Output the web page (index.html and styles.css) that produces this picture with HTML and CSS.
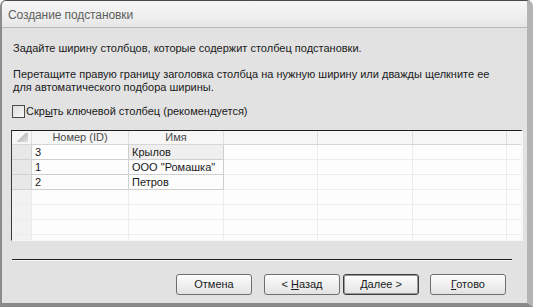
FILE: index.html
```html
<!DOCTYPE html>
<html lang="ru">
<head>
<meta charset="utf-8">
<title>Создание подстановки</title>
<link rel="stylesheet" href="styles.css">
</head>
<body>
<div class="window">
  <div class="titlebar">Создание подстановки</div>
  <div class="content">
    <p class="p1">Задайте ширину столбцов, которые содержит столбец подстановки.</p>
    <p class="p2">Перетащите правую границу заголовка столбца на нужную ширину или дважды щелкните ее<br>для автоматического подбора ширины.</p>
    <label class="check"><span class="box"></span><span>Скр<u>ы</u>ть ключевой столбец (рекомендуется)</span></label>
    <div class="grid">
      <div class="row head">
        <div class="cell sel corner"></div>
        <div class="cell c">Номер (ID)</div>
        <div class="cell c">Имя</div>
        <div class="cell"></div><div class="cell"></div><div class="cell"></div><div class="cell"></div>
      </div>
      <div class="row data cur">
        <div class="cell sel"></div>
        <div class="cell active">3</div>
        <div class="cell">Крылов</div>
        <div class="cell"></div><div class="cell"></div><div class="cell"></div><div class="cell"></div>
      </div>
      <div class="row data">
        <div class="cell sel"></div>
        <div class="cell">1</div>
        <div class="cell">ООО "Ромашка"</div>
        <div class="cell"></div><div class="cell"></div><div class="cell"></div><div class="cell"></div>
      </div>
      <div class="row data">
        <div class="cell sel"></div>
        <div class="cell">2</div>
        <div class="cell">Петров</div>
        <div class="cell"></div><div class="cell"></div><div class="cell"></div><div class="cell"></div>
      </div>
      <div class="row empty"><div class="cell sel"></div><div class="cell"></div><div class="cell"></div><div class="cell"></div><div class="cell"></div><div class="cell"></div><div class="cell"></div></div>
      <div class="row empty"><div class="cell sel"></div><div class="cell"></div><div class="cell"></div><div class="cell"></div><div class="cell"></div><div class="cell"></div><div class="cell"></div></div>
      <div class="row empty"><div class="cell sel"></div><div class="cell"></div><div class="cell"></div><div class="cell"></div><div class="cell"></div><div class="cell"></div><div class="cell"></div></div>
      <div class="row empty"><div class="cell sel"></div><div class="cell"></div><div class="cell"></div><div class="cell"></div><div class="cell"></div><div class="cell"></div><div class="cell"></div></div>
    </div>
    <div class="sep"></div>
    <div class="buttons">
      <button class="btn">Отмена</button>
      <button class="btn b2">&lt; <u>Н</u>азад</button>
      <button class="btn b3 default"><u>Д</u>алее &gt;</button>
      <button class="btn b4"><u>Г</u>отово</button>
    </div>
  </div>
</div>
</body>
</html>
```

FILE: styles.css
```css
* { box-sizing: border-box; }
html, body { margin: 0; padding: 0; background: #ffffff; }
body {
  font-family: "Liberation Sans", Arial, sans-serif;
  font-size: 11px;
  color: #1a1a1a;
}
.window {
  width: 533px;
  height: 307px;
  border-top: 1px solid #4a4a4a;
  border-left: 2px solid #8c8c8c;
  border-right: 6px solid #b4b4b4;
  border-bottom: 4px solid #8a8a8a;
  border-radius: 6px 6px 0 0;
  background: #e2e2e2;
  overflow: hidden;
  display: flex;
  flex-direction: column;
}
.titlebar {
  height: 27px;
  flex: none;
  padding: 6px 0 0 6px;
  font-size: 12px;
  line-height: 17px;
  color: #5e5e5e;
  background: linear-gradient(#f6f6f6, #eeeeee 60%, #e6e6e6);
  border-bottom: 1px solid #b8b8b8;
  letter-spacing: -0.1px;
}
.content {
  flex: 1;
  padding: 0 0 0 9px;
  display: flex;
  flex-direction: column;
}
p { margin: 0; line-height: 13px; padding-left: 2px; }
.p1 { margin-top: 14px; }
.p2 { margin-top: 13px; }
.check {
  margin-top: 10px;
  height: 14px;
  display: flex;
  align-items: center;
  gap: 1px;
  padding-left: 1px;
  line-height: 14px;
}
.box {
  width: 13px;
  height: 13px;
  border: 1px solid #4c4c4c;
  background: linear-gradient(135deg, #dcdcdc, #f8f8f8);
  display: inline-block;
}
.grid {
  margin-top: 12px;
  width: 512px;
  height: 111px;
  border-top: 1px solid #1e1e1e;
  border-left: 1px solid #3a3a3a;
  border-right: 2px solid #f6f6f6;
  border-bottom: 1px solid #f6f6f6;
  background: #fdfdfd;
  overflow: hidden;
}
.row {
  display: grid;
  grid-template-columns: 20px 97px 95px 94px 95px 94px 15px;
  height: 15px;
}
.row.head { height: 14px; }
.cell {
  border-right: 1px solid #ececec;
  border-bottom: 1px solid #ececec;
  padding-left: 3px;
  line-height: 14px;
  white-space: nowrap;
  overflow: hidden;
}
.head .cell {
  background: #f6f6f6;
  color: #4a4a4a;
  line-height: 13px;
  border-color: #dedede;
  border-bottom-color: #d6d6d6;
}
.head .c { text-align: center; padding-left: 0; }
.sel { background: #f2f2f2; }
.data .sel { background: #e8e8e8; border-color: #d2d2d2; }
.data .cell:nth-child(2), .data .cell:nth-child(3) { border-color: #cfcfcf; }
.cur .cell:nth-child(3) { background: #efefef; }
.cur .active { background: #ffffff; border-right-color: #bdbdbd; }
.corner {
  background: #f0f0f0;
  position: relative;
}
.corner::after {
  content: "";
  position: absolute;
  left: 3px;
  top: 2px;
  width: 13px;
  height: 9px;
  background: linear-gradient(135deg, transparent 50%, #c4c4c4 50%, #dedede);
}
.sep {
  margin-top: 18px;
  width: 500px;
  margin-left: 1px;
  border-top: 1px solid #222;
  border-bottom: 1px solid #f4f4f4;
}
.buttons {
  margin-top: 13px;
  display: flex;
  padding-left: 165px;
}
.btn {
  width: 76px;
  height: 21px;
  font-family: "Liberation Sans", Arial, sans-serif;
  font-size: 11px;
  color: #1a1a1a;
  border: 1px solid #6e6e6e;
  border-radius: 3px;
  background: linear-gradient(#fdfdfd, #f0f0f0 50%, #e2e2e2);
  padding: 0;
  line-height: 19px;
}
.b2 { margin-left: 12px; }
.b3 { margin-left: 3px; }
.b4 { margin-left: 11px; }
.default { border-color: #3c3c3c; box-shadow: inset 0 0 0 1px #9a9a9a; }
```
